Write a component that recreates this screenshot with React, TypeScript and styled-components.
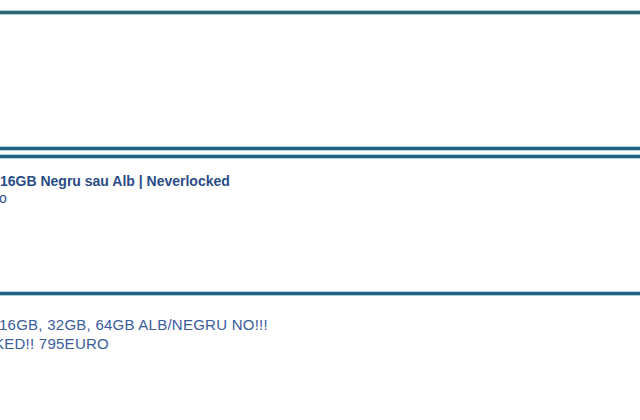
import { createGlobalStyle } from 'styled-components'
import styled from 'styled-components'

const GlobalStyle = createGlobalStyle`
  html, body {
    margin: 0;
    padding: 0;
    background: #ffffff;
    font-family: "Liberation Sans", Arial, sans-serif;
  }
`

const Page = styled.div`
  width: 640px;
  height: 420px;
  overflow: hidden;
  display: flex;
  flex-direction: column;
  padding-top: 11px;
  box-sizing: border-box;
`

const Rule = styled.div<{ $color?: string }>`
  height: 3px;
  background: ${(p) => p.$color || '#24607f'};
  box-shadow: 0 -1px 0 #a9d3e0, 0 1px 0 #a9d3e0;
  flex-shrink: 0;
`

const Block = styled.div<{ $height: number }>`
  height: ${(p) => p.$height}px;
  flex-shrink: 0;
`

const Post = styled.div<{ $height?: number; $pad: number }>`
  padding-top: ${(p) => p.$pad}px;
  height: ${(p) => (p.$height ? `${p.$height}px` : 'auto')};
  box-sizing: border-box;
  overflow: hidden;
  flex-shrink: 0;
`

const Title = styled.div`
  font-size: 14px;
  font-weight: bold;
  line-height: 17px;
  color: #2a4c86;
  white-space: nowrap;
`

const Sub = styled.div`
  font-size: 14px;
  line-height: 17px;
  color: #2f4f86;
  white-space: nowrap;
  margin-left: -1px;
`

const Body = styled.div<{ $shift?: number }>`
  font-size: 15px;
  line-height: 19px;
  letter-spacing: 0.25px;
  color: #3a5c9c;
  white-space: nowrap;
  margin-left: ${(p) => p.$shift || 0}px;
`

export default function App() {
  return (
    <>
      <GlobalStyle />
      <Page>
        <Rule $color="#33676f" />
        <Block $height={133} />
        <Rule />
        <Block $height={5} />
        <Rule />
        <Post $pad={15} $height={134}>
          <Title>16GB Negru sau Alb | Neverlocked</Title>
          <Sub>o</Sub>
        </Post>
        <Rule />
        <Post $pad={20}>
          <Body $shift={-1}>16GB, 32GB, 64GB ALB/NEGRU NO!!!</Body>
          <Body $shift={-6}>KED!! 795EURO</Body>
        </Post>
      </Page>
    </>
  )
}
